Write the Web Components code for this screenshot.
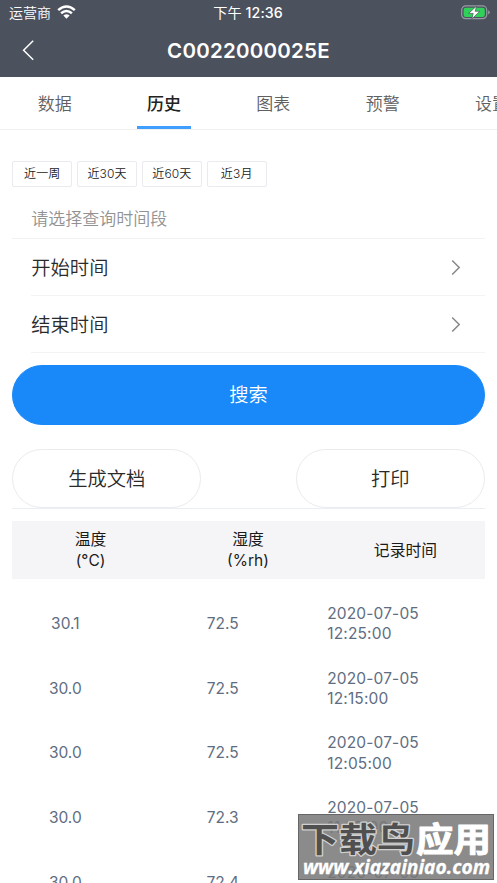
<!DOCTYPE html>
<html lang="zh-CN">
<head>
<meta charset="utf-8">
<meta name="viewport" content="width=device-width, initial-scale=1">
<title>C0022000025E</title>
<style>
    html, body {
        margin: 0;
        height: 100%;
        overflow: hidden;
        background: #fff;
        font-family: Inter, "Noto Sans CJK SC", sans-serif;
    }
</style>
</head>
<body>
<history-page></history-page>

<script>
// Defines an element whose shadow root is cloned from a template
function define(name, html, setup) {
    const tmpl = document.createElement('template');
    tmpl.innerHTML = html;

    window.customElements.define(name, class extends HTMLElement {
        constructor() {
            super();
            this.attachShadow({ mode: 'open' });
            this.shadowRoot.appendChild(tmpl.content.cloneNode(true));
        }

        connectedCallback() {
            if (setup) setup(this, this.shadowRoot);
        }
    });
}

define('status-bar', `
    <style>
        :host {
            display: grid;
            grid-template-columns: 1fr auto 1fr;
            align-items: center;
            height: 25px;
            padding: 0 7px 0 9px;
            color: #fff;
            font-size: 14px;
            line-height: 25px;
        }
        .left { display: flex; align-items: center; gap: 6px; font-weight: 350; }
        .time { font-weight: 500; font-size: 14.2px; margin-left: -3px; letter-spacing: .1px; }
        .cn { font-weight: 400; }
        .battery { justify-self: end; display: block; }
    </style>
    <div class="left">
        <span>运营商</span>
        <svg width="19" height="15" viewBox="0 0 19 15" fill="none" stroke="#fff" stroke-width="2.5">
            <path d="M1.2 5.1Q9.5-2.2 17.8 5.1"/>
            <path d="M4.1 8.3Q9.5 3.6 14.9 8.3"/>
            <path d="M6.4 10.6Q9.5 8 12.6 10.6L9.5 13.7Z" fill="#fff" stroke="none"/>
        </svg>
    </div>
    <div class="time"><span class="cn">下午</span> 12:36</div>
    <svg class="battery" width="29" height="15" viewBox="0 0 29 15">
        <rect x=".7" y=".9" width="25" height="12.8" rx="4" fill="none" stroke="#969aa2" stroke-width="1.2"/>
        <rect x="2.6" y="2.7" width="21.2" height="9.2" rx="2.2" fill="#30d158"/>
        <path d="M27.1 5.2Q28.8 5.8 28.8 7.3T27.1 9.5Z" fill="#969aa2"/>
        <path d="M15.6 1L7.6 8.4H12.2L10.8 14L18.8 6.3H14.2Z" fill="#fff" stroke="#4c515e" stroke-width=".7"/>
    </svg>
`);

define('nav-bar', `
    <style>
        :host {
            display: grid;
            grid-template-columns: 56px 1fr 56px;
            align-items: center;
            height: 52px;
            color: #fff;
        }
        .back { display: block; margin-left: 21px; margin-top: -3px; }
        .title {
            text-align: center;
            font-size: 20.5px;
            font-weight: 600;
            letter-spacing: .25px;
            line-height: 50px;
        }
    </style>
    <svg class="back" width="14" height="22" viewBox="0 0 14 22" fill="none" stroke="#fff" stroke-width="1.5">
        <path d="M12.2 1.8L2.6 11.3L12.2 20.8"/>
    </svg>
    <div class="title"><slot></slot></div>
`);

define('tab-item', `
    <style>
        :host {
            display: flex;
            flex: 0 0 22%;
            justify-content: center;
            font-size: 17px;
            font-weight: 350;
            line-height: 54px;
            color: #606060;
        }
        :host([active]) {
            color: #222;
            font-weight: 500;
        }
        .label {
            display: grid;
            width: 50%;
            box-sizing: border-box;
            justify-content: center;
            white-space: nowrap;
            height: 52px;
        }
        :host([active]) .label {
            background: linear-gradient(#409eff, #409eff) bottom / 100% 3px no-repeat;
        }
    </style>
    <div class="label"><slot></slot></div>
`);

define('tab-bar', `
    <style>
        :host {
            display: flex;
            height: 52px;
            overflow: hidden;
            border-bottom: 1px solid #f0f0f0;
        }
    </style>
    <slot></slot>
`);

define('range-chip', `
    <style>
        :host {
            display: block;
            box-sizing: border-box;
            width: 60px;
            height: 26px;
            border: 1px solid #e9ebf1;
            border-radius: 2px;
            text-align: center;
            font-size: 12px;
            font-weight: 350;
            line-height: 24px;
            letter-spacing: .15px;
            color: #222;
        }
    </style>
    <slot></slot>
`);

define('picker-cell', `
    <style>
        :host {
            display: flex;
            align-items: center;
            justify-content: space-between;
            box-sizing: border-box;
            height: 57.2px;
            margin-left: 19px;
            padding-right: 24px;
            border-bottom: 1px solid #f4f4f4;
            font-size: 19.3px;
            font-weight: 350;
            color: #2a2a2a;
        }
        span { padding-top: 1px; }
    </style>
    <span><slot></slot></span>
    <svg width="10" height="16" viewBox="0 0 10 16" fill="none" stroke="#888" stroke-width="1.5">
        <path d="M1.2 1.5L8.2 8.5L1.2 15.5"/>
    </svg>
`);

define('pill-button', `
    <style>
        :host {
            display: block;
            box-sizing: border-box;
            height: 60px;
            border: 1px solid #ebebed;
            border-radius: 30px;
            text-align: center;
            font-size: 19.3px;
            font-weight: 350;
            line-height: 59px;
            color: #2a2a2a;
        }
        :host([primary]) {
            border-color: #1989fa;
            background: #1989fa;
            color: #fff;
        }
    </style>
    <slot></slot>
`);

define('record-table', `
    <style>
        :host { display: block; font-size: 15.5px; }
        .head, .row {
            display: grid;
            grid-template-columns: repeat(3, 1fr);
            align-items: center;
        }
        .head {
            height: 58px;
            margin-bottom: 13px;
            background: #f5f5f7;
            color: #1a1a1a;
            font-size: 15.8px;
            line-height: 20.5px;
            text-align: center;
        }
        .head div { padding-top: 2px; margin-left: -1px; }
        .row {
            height: 64.7px;
            color: #5e6d82;
            line-height: 20.5px;
        }
        .num { width: 106px; text-align: center; }
        .unit { font-size: 15.5px; }
        .date { letter-spacing: .15px; }
    </style>
    <div class="head">
        <div>温度<br><span class="unit">(°C)</span></div>
        <div>湿度<br><span class="unit">(%rh)</span></div>
        <div>记录时间</div>
    </div>
    <div id="rows"></div>
`, (host, root) => {
    const records = [
        ['30.1', '72.5', '12:25:00'],
        ['30.0', '72.5', '12:15:00'],
        ['30.0', '72.5', '12:05:00'],
        ['30.0', '72.3', '11:55:00'],
        ['30.0', '72.4', '11:45:00'],
    ];
    root.getElementById('rows').innerHTML = records.map(([temp, hum, time]) => `
        <div class="row">
            <div class="num">${temp}</div>
            <div class="num">${hum}</div>
            <div class="date">2020-07-05<br>${time}</div>
        </div>`).join('');
});

define('site-mark', `
    <style>
        :host {
            display: block;
            position: absolute;
            right: 3px;
            bottom: 3px;
            width: 196px;
            height: 66px;
        }
        svg { display: block; }
        text {
            font-family: "Noto Sans CJK SC", sans-serif;
            font-weight: 700;
            paint-order: stroke;
            stroke-linejoin: round;
        }
        .url { font-family: "Open Sans", "Noto Sans", sans-serif; font-style: italic; }
    </style>
    <svg width="196" height="66" viewBox="0 0 196 66">
        <rect x=".5" y=".5" width="195" height="65" fill="#787878" fill-opacity=".86" stroke="#666"/>
        <text x="3" y="38" font-size="34" textLength="114" lengthAdjust="spacingAndGlyphs" fill="#505050" stroke="#d0d0d0" stroke-width="2.5">下载鸟</text>
        <text x="118" y="38" font-size="34" textLength="75" lengthAdjust="spacingAndGlyphs" fill="#fff" stroke="#fff" stroke-width="1">应用</text>
        <text class="url" x="5" y="60" font-size="19.5" textLength="187" lengthAdjust="spacingAndGlyphs" fill="#fff" stroke="#fff" stroke-width=".3">www.xiazainiao.com</text>
    </svg>
`);

define('history-page', `
    <style>
        :host {
            display: block;
            position: relative;
            height: 883px;
            overflow: hidden;
        }
        header { background: #4c515e; }
        main { padding: 31px 12.3px 0; }
        .chips { display: flex; gap: 4.8px; }
        .hint {
            height: 50.5px;
            padding-left: 19px;
            border-bottom: 1px solid #f2f2f2;
            font-size: 17px;
            font-weight: 350;
            line-height: 64px;
            color: #929292;
        }
        .search { margin-top: 12.1px; }
        .actions {
            display: flex;
            justify-content: space-between;
            margin: 24px 0 12px;
            border-bottom: 1px solid #ebeef5;
        }
        .actions pill-button { width: 189px; height: 59px; }
    </style>
    <header>
        <status-bar></status-bar>
        <nav-bar>C0022000025E</nav-bar>
    </header>
    <tab-bar>
        <tab-item>数据</tab-item>
        <tab-item active>历史</tab-item>
        <tab-item>图表</tab-item>
        <tab-item>预警</tab-item>
        <tab-item>设置</tab-item>
    </tab-bar>
    <main>
        <div class="chips">
            <range-chip>近一周</range-chip>
            <range-chip>近30天</range-chip>
            <range-chip>近60天</range-chip>
            <range-chip>近3月</range-chip>
        </div>
        <div class="hint">请选择查询时间段</div>
        <picker-cell>开始时间</picker-cell>
        <picker-cell>结束时间</picker-cell>
        <pill-button class="search" primary>搜索</pill-button>
        <div class="actions">
            <pill-button>生成文档</pill-button>
            <pill-button>打印</pill-button>
        </div>
        <record-table></record-table>
    </main>
    <site-mark></site-mark>
`);
</script>
</body>
</html>
